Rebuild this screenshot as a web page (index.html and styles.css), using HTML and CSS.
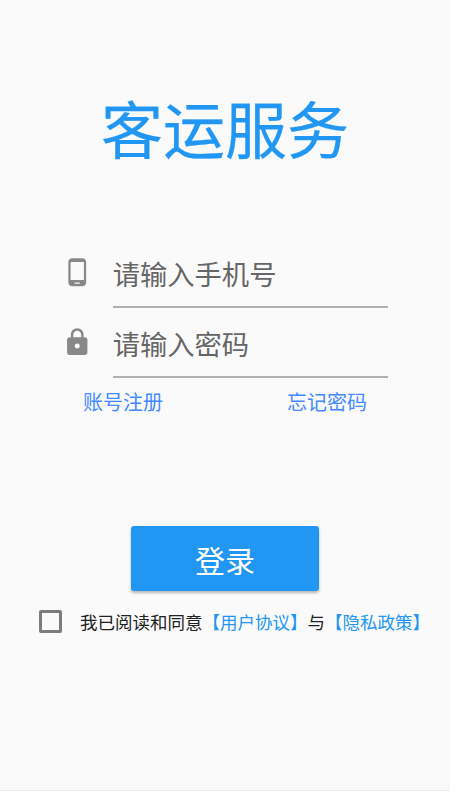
FILE: index.html
```html
<!DOCTYPE html>
<html lang="zh-CN">
<head>
<meta charset="utf-8">
<title>客运服务</title>
<link rel="stylesheet" href="styles.css">
</head>
<body>
<main class="screen">
  <h1 class="title">客运服务</h1>
  <form class="form">
    <div class="field">
      <svg class="icon" viewBox="0 0 24 24"><path d="M16 1H8C6.340 1 5 2.340 5 4v16c0 1.660 1.340 3 3 3h8c1.660 0 3-1.340 3-3V4c0-1.660-1.340-3-3-3zm-2 20h-4v-1h4v1zm3.250-3H6.750V4h10.500v14z"/></svg>
      <div class="input">请输入手机号</div>
    </div>
    <div class="field">
      <svg class="icon" viewBox="0 0 24 24"><path d="M18 8h-1V6c0-2.760-2.240-5-5-5S7 3.240 7 6v2H6c-1.100 0-2 .9-2 2v10c0 1.100.9 2 2 2h12c1.100 0 2-.9 2-2V10c0-1.100-.9-2-2-2zm-6 9c-1.100 0-2-.9-2-2s.9-2 2-2 2 .9 2 2-.9 2-2 2zm3.100-9H8.900V6c0-1.710 1.390-3.100 3.100-3.100 1.710 0 3.100 1.390 3.100 3.100v2z"/></svg>
      <div class="input">请输入密码</div>
    </div>
  </form>
  <div class="links"><a>账号注册</a><a>忘记密码</a></div>
  <button class="login" type="button">登录</button>
  <div class="agree"><span class="box"></span><span class="terms">我已阅读和同意<a>【用户协议】</a>与<a>【隐私政策】</a></span></div>
  <div class="nav"></div>
</main>
</body>
</html>
```

FILE: styles.css
```css
* { box-sizing: border-box; }
body { margin: 0; font-family: "Noto Sans CJK SC", sans-serif; background: #fafafa; }
.screen { height: 800px; display: flex; flex-direction: column; overflow: hidden; }
.title { margin: 82px 0 0; height: 90px; line-height: 90px; text-align: center; font-size: 62px; font-weight: 400; color: #2196f3; -webkit-text-stroke: 0.25px #2196f3; }
.form { margin: 66px 62px 0; }
.field { display: flex; height: 70px; }
.icon { flex: none; width: 30.500px; height: 30.500px; margin: 19px 20.200px 0 0; fill: #888; }
.input { flex: none; width: 275px; height: 70px; border-bottom: 2px solid #b0b0b0; font-size: 27.300px; line-height: 70px; color: #666; white-space: nowrap; }
.links { height: 48px; padding: 0 83px; display: flex; justify-content: space-between; font-size: 20px; line-height: 47px; color: #448aff; }
.login { margin: 100px 131px 0; height: 65px; border: 0; border-radius: 3px; padding: 2px 0 0; background: #2196f3; color: #fff; font: 400 30px/63px "Noto Sans CJK SC", sans-serif; box-shadow: 0 2px 3px rgba(0,0,0,.28); }
.agree { display: flex; align-items: center; height: 40px; margin-top: 10px; padding-left: 38.500px; }
.box { width: 23px; height: 23px; border: 3px solid #7c7c7c; border-radius: 2px; }
.terms { margin-left: 18.500px; font-size: 17.500px; line-height: 26px; padding-top: 1px; white-space: nowrap; color: #212121; }
.terms a { color: #2196f3; }
.nav { margin-top: auto; height: 10px; border-top: 1px solid #ebebeb; background: #fff; }
```
